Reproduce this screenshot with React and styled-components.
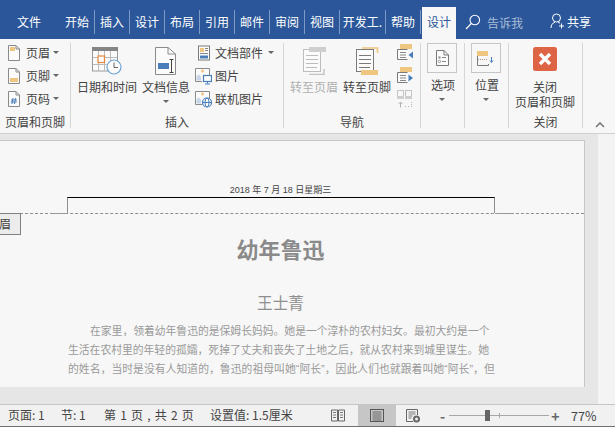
import React from "react";
import styled, { createGlobalStyle } from "styled-components";

const Global = createGlobalStyle`
  html, body { margin: 0; padding: 0; width: 615px; height: 427px; overflow: hidden; }
  body { font-family: "Noto Sans CJK SC", "Liberation Sans", sans-serif; background: #f7f7f7; }
  * { box-sizing: border-box; }
`;

const Shell = styled.div`
  width: 615px; height: 427px; display: flex; flex-direction: column; overflow: hidden;
`;

/* Title bar */
const TitleBar = styled.div`
  height: 39px; flex: none; background: #2b579a; display: flex; align-items: flex-start; color: #fff; font-size: 12px;
`;
const FileTab = styled.div`
  width: 60px; padding: 10px 0 0 17px; height: 39px; line-height: 24px;
`;
const Tab = styled.div`
  width: ${p => p.$w || 35}px; height: 24px; margin-top: 10px; line-height: 24px; text-align: center;
  border-right: 1px solid #7d9ac6; white-space: nowrap; overflow: hidden; flex: none;
`;
const ActiveTab = styled.div`
  width: 34px; height: 32px; margin: 7px 0 0 1px; padding-top: 3px; line-height: 24px; text-align: center;
  background: #f7f7f7; color: #2b579a; flex: none;
`;
const TellMe = styled.div`
  margin: 10px 0 0 9px; width: 85px; flex: none; display: flex; align-items: center; gap: 6px; height: 24px; color: #a9bbd8;
`;
const Share = styled.div`
  display: flex; align-items: center; gap: 2px; height: 24px; margin-top: 9px;
`;

/* Ribbon */
const Ribbon = styled.div`
  height: 95px; flex: none; background: #f7f7f7; padding: 4px 0 5px; display: flex;
  border-bottom: 1px solid #d0d0d0; color: #444; font-size: 12px;
`;
const Group = styled.div`
  width: ${p => p.$w}px; flex: none; border-right: 1px solid #d6d6d6; display: flex; flex-direction: column;
`;
const GroupBody = styled.div`
  height: 73px; display: flex; padding-left: ${p => p.$pad || 0}px; gap: ${p => p.$gap || 0}px;
`;
const GroupLabel = styled.div`
  height: 12px; line-height: 12px; text-align: center; white-space: nowrap;
`;
const Stack = styled.div`
  display: flex; flex-direction: column; margin-top: -2px;
`;
const SmallBtn = styled.div`
  height: 23px; display: flex; align-items: center; white-space: nowrap; gap: ${p => p.$gap || 3}px;
  padding-left: ${p => p.$pad || 0}px; flex: none;
`;
const Arrow = styled.span`
  display: inline-block; width: 0; height: 0; border-left: 3px solid transparent; border-right: 3px solid transparent;
  border-top: 3px solid #666; margin-left: ${p => p.$ml || 0}px; flex: none;
`;
const LargeBtn = styled.div`
  width: ${p => p.$w || 48}px; display: flex; flex-direction: column; align-items: center; padding-top: 4px; flex: none;
  color: ${p => p.$off ? "#b0b0b0" : "inherit"};
`;
const LargeIcon = styled.div`
  height: 28px; display: flex; justify-content: center; align-items: flex-start;
`;
const LargeText = styled.div`
  margin-top: 4px; line-height: ${p => p.$lh || 16}px; white-space: nowrap; text-align: center;
`;
const DropMark = styled.div`
  margin-top: 3px; height: 6px; display: flex; align-items: center;
`;
const BoxBtn = styled.div`
  width: 42px; display: flex; flex-direction: column; align-items: center;
`;
const BoxIcon = styled.div`
  width: 30px; height: 30px; border: 1px solid #c6c6c6; display: flex; align-items: center; justify-content: center;
`;
const BoxText = styled.div`
  margin: 4px 0 0 2px; line-height: 16px;
`;
const Collapse = styled.div`
  flex: 1; display: flex; justify-content: center; align-items: flex-end; padding: 0 0 0 2px;
`;

/* Workspace */
const Workspace = styled.div`
  flex: 1; display: flex; min-height: 0;
`;
const Canvas = styled.div`
  width: 598px; flex: none; background: #e6e6e6; padding: 6px 13px 17px 0; display: flex;
`;
const ScrollTrack = styled.div`
  flex: 1; background: #f4f4f4;
`;
const Page = styled.div`
  width: 585px; background: #f7f7f7; border-top: 1px solid #c6c6c6; border-right: 1px solid #c6c6c6;
  position: relative; overflow: hidden; color: #8a8a8a;
`;
const HeaderArea = styled.div`
  height: 73px; border-bottom: 1px dashed #8e8e8e; display: flex; flex-direction: column; align-items: center; justify-content: flex-end;
  padding-right: 23px;
`;
const HeaderDate = styled.div`
  font-size: 9px; line-height: 12px; color: #444; white-space: nowrap; margin-bottom: 1px; font-family: "Liberation Sans", "Noto Sans CJK SC", sans-serif;
`;
const HeaderFrame = styled.div`
  width: 428px; height: 16px; border-top: 1px solid #000; border-left: 1px solid #8e8e8e; border-right: 1px solid #8e8e8e; position: relative;
  &::before, &::after { content: ""; position: absolute; bottom: -1px; height: 1px; background: #999; width: 16px; }
  &::before { left: -16px; }
  &::after { right: -17px; }
`;
const HeaderTag = styled.div`
  position: absolute; left: -23px; top: 72px; width: 44px; height: 22px; background: #ececec; border: 1px solid #808080;
  font-size: 12px; line-height: 20px; text-align: center; color: #444; white-space: nowrap;
`;
const DocTitle = styled.h1`
  margin: 21px 0 0; padding-right: 23px; font-size: 22px; line-height: 26px; font-weight: 700; text-align: center; color: #8a8a8a;
`;
const DocAuthor = styled.div`
  margin-top: 31px; padding-right: 23px; font-size: 15.6px; line-height: 20px; text-align: center; color: #8f8f8f;
`;
const Para = styled.div`
  margin: 10px 0 0 68px; font-size: 10.8px; color: #9a9a9a; white-space: nowrap;
  font-family: "Liberation Sans", "Noto Sans CJK SC", sans-serif;
`;
const ParaLine = styled.div`
  height: 19px; line-height: 19px; padding-left: ${p => p.$indent || 0}px; letter-spacing: ${p => p.$track || 0}px;
`;

/* Status bar */
const StatusBar = styled.div`
  height: 23px; flex: none; background: #f1f1f1; border-top: 1px solid #c6c6c6; border-bottom: 1px solid #6f6f6f;
  display: flex; align-items: stretch; font-size: 12px; color: #444; white-space: nowrap; position: relative;
`;
const StatusText = styled.div`
  line-height: 20px; width: ${p => p.$w}px; flex: none; padding-left: ${p => p.$pad || 0}px; word-spacing: ${p => p.$ws || 0}px;
`;
const ViewBtn = styled.div`
  width: ${p => p.$w || 38}px; display: flex; align-items: center; justify-content: center; flex: none;
  padding-right: ${p => p.$shift || 0}px;
  background: ${p => p.$on ? "#c6c6c6" : "transparent"};
`;
const ZoomCtl = styled.div`
  display: flex; align-items: center; margin-left: 2px; flex: none;
`;
const ZoomSign = styled.span`
  width: ${p => p.$w}px; text-align: center; font-size: 14px; font-weight: 700; color: #666; line-height: 20px;
`;
const Track = styled.div`
  width: 100px; height: 1px; background: #a8a8a8; position: relative;
`;
const Thumb = styled.div`
  position: absolute; left: 36px; top: -5px; width: 5px; height: 11px; background: #666;
`;
const Tick = styled.div`
  position: absolute; left: 50px; top: -2px; width: 1px; height: 5px; background: #a8a8a8;
`;
const Percent = styled.div`
  line-height: 20px; margin-left: 9px; font-size: 12.5px;
`;

/* Icons */
const P = { g: "#7a7a7a", t: "#efc67f", b: "#4a7ebb", l: "#bdbdbd" };
const Svg = styled.svg`
  display: block; flex: none;
`;
const DocSmall = ({ children }) => (
  <Svg width="14" height="16" viewBox="0 0 14 16">
    <path d="M1.5.5H9L12.5 4v11.5h-11z" fill="#fbfbfb" stroke="#8a8a8a" />
    <path d="M9 .5V4h3.5" fill="none" stroke="#8a8a8a" />
    {children}
  </Svg>
);
const IconHeader = () => <DocSmall><rect x="3" y="2" width="5" height="4" fill={P.t} /></DocSmall>;
const IconFooter = () => <DocSmall><rect x="3" y="10" width="8" height="4" fill={P.t} /></DocSmall>;
const IconNum = () => <DocSmall><path d="M6 7l-1 6M8.5 7l-1 6M4 9h6M3.8 11h6" stroke={P.b} fill="none" /></DocSmall>;
const IconCalendar = () => (
  <Svg width="30" height="28" viewBox="0 0 30 28">
    <rect x="0.5" y="0" width="25" height="24" fill="#fbfbfb" stroke="#999" />
    <rect x="0" y="0" width="26" height="4" fill="#858585" />
    <path d="M6.5 4v20M12.5 4v20M18.5 4v20M1 10.5h24M1 17.5h24" stroke="#bbb" fill="none" />
    <rect x="6" y="9" width="6.5" height="6.5" fill="#fbfbfb" stroke="#e8893a" strokeWidth="1.2" />
    <circle cx="22" cy="20" r="7" fill="#fbfbfb" stroke="#6fa3d6" strokeWidth="1.2" />
    <path d="M22 15.5V20.5H26" fill="none" stroke="#666" />
  </Svg>
);
const IconDocInfo = () => (
  <Svg width="22" height="28" viewBox="0 0 22 28">
    <path d="M.5.5H13L20.5 7V27.5H.5z" fill="#fbfbfb" stroke="#8a8a8a" />
    <path d="M13 .5V7h7.5" fill="none" stroke="#8a8a8a" />
    <rect x="3" y="16" width="11" height="6" fill={P.b} />
    <path d="M14.5 12.5h4M14.5 25.5h4M16.5 12.5v13" fill="none" stroke="#444" />
  </Svg>
);
const IconParts = () => (
  <Svg width="16" height="16" viewBox="0 0 16 16">
    <rect x="2.5" y="1" width="11" height="14" fill="#fbfbfb" stroke="#7a7a7a" />
    <rect x="4" y="3" width="4" height="4" fill={P.t} />
    <path d="M9 3.5h3M9 5.5h3M4 8.5h8" stroke="#888" />
    <rect x="4" y="10.5" width="8" height="3" fill={P.b} />
  </Svg>
);
const PictureBase = () => (
  <>
    <path d="M14.5 9V1.5H.5v13H7" fill="#fbfbfb" stroke="#8a8a8a" />
    <path d="M7.5 2.5v3M6 4h3" stroke={P.t} strokeWidth="1.4" />
    <path d="M1.5 13.5V10l2-3 2.5 3v3.5z" fill="#c6d5e8" />
  </>
);
const IconPicture = () => (
  <Svg width="17" height="18" viewBox="0 0 17 18">
    <PictureBase />
    <rect x="8.5" y="8.5" width="8" height="6" fill="#fbfbfb" stroke={P.b} strokeWidth="1.2" />
    <path d="M12.5 14.5v2M10 17h5" stroke={P.b} />
  </Svg>
);
const IconOnline = () => (
  <Svg width="17" height="18" viewBox="0 0 17 18">
    <PictureBase />
    <circle cx="12" cy="12.5" r="4.5" fill="#fbfbfb" stroke={P.b} strokeWidth="1.2" />
    <ellipse cx="12" cy="12.5" rx="2" ry="4.5" fill="none" stroke={P.b} />
    <path d="M7.5 12.5h9" stroke={P.b} />
  </Svg>
);
const PageLines = ({ x = 0, y = 0, c, w = 17, h = 22 }) => (
  <>
    <rect x={x + 0.5} y={y + 0.5} width={w} height={h} fill="#fbfbfb" stroke={c} />
    <path d={`M${x + 3} ${y + 6.5}h${w - 5}M${x + 3} ${y + 10.5}h${w - 5}M${x + 3} ${y + 14.5}h${w - 5}M${x + 3} ${y + 18.5}h${w - 6}`} stroke={c} fill="none" />
  </>
);
const IconGoHeader = () => (
  <Svg width="23" height="28" viewBox="0 0 23 28">
    <PageLines y={2} c="#bdbdbd" />
    <rect x="6" y="0" width="17" height="5" fill="#cfcfcf" />
    <path d="M21 22v5.5H6" fill="none" stroke="#c4c4c4" strokeWidth="1.4" />
  </Svg>
);
const IconGoFooter = () => (
  <Svg width="23" height="28" viewBox="0 0 23 28">
    <path d="M6 1h15.5v5" fill="none" stroke={P.t} strokeWidth="1.6" />
    <PageLines y={2} c="#7a7a7a" />
    <rect x="5" y="23" width="17" height="5" fill={P.t} />
  </Svg>
);
const IconPrev = () => (
  <Svg width="16" height="17" viewBox="0 0 16 17">
    <rect x="3" y="0" width="12" height="5" fill={P.t} />
    <path d="M10.5 5.5H.5v10h10" fill="#fbfbfb" stroke="#7a7a7a" />
    <path d="M3 8.5h6M3 11h6M3 13.5h6" stroke="#888" />
    <path d="M16 7.5v7l-4.5-3.5z" fill={P.b} />
  </Svg>
);
const IconNext = () => (
  <Svg width="16" height="17" viewBox="0 0 16 17">
    <rect x="3" y="0" width="12" height="5" fill={P.t} />
    <path d="M10.5 5.5H.5v10h10" fill="#fbfbfb" stroke="#7a7a7a" />
    <path d="M3 8.5h6M3 11h6M3 13.5h6" stroke="#888" />
    <path d="M11.5 7.5v7L16 11z" fill={P.b} />
  </Svg>
);
const IconLink = () => (
  <Svg width="16" height="18" viewBox="0 0 16 18">
    <rect x="0.5" y="0.5" width="6" height="6" fill="none" stroke="#c4c4c4" />
    <rect x="8.5" y="0.5" width="6" height="6" fill="none" stroke="#c4c4c4" />
    <rect x="0" y="6" width="7" height="3" fill="#cfcfcf" />
    <rect x="8" y="6" width="7" height="3" fill="#cfcfcf" />
    <path d="M3.5 17.5V12M1.5 14l2-2 2 2" fill="none" stroke="#b5b5b5" />
    <path d="M8 16.5h1M11 16.5h1M14 16.5h1M14 12.5h1M14 14.5h1" stroke="#b5b5b5" />
  </Svg>
);
const IconOptions = () => (
  <Svg width="13" height="16" viewBox="0 0 13 16">
    <path d="M.5.5H8L12.5 5v10.5H.5z" fill="#fbfbfb" stroke="#7a7a7a" />
    <path d="M8 .5V5h4.5" fill="none" stroke="#7a7a7a" />
    <circle cx="3.5" cy="7.5" r="1.2" fill="#999" />
    <circle cx="3.5" cy="11.5" r="1.2" fill="none" stroke="#999" />
    <path d="M6 7.5h4M6 11.5h4" stroke="#888" />
  </Svg>
);
const IconPosition = () => (
  <Svg width="18" height="15" viewBox="0 0 18 15">
    <rect x="0" y="0" width="11" height="5" fill={P.t} />
    <path d="M.5 5v9.5h11V13" fill="none" stroke="#7a7a7a" />
    <path d="M1 8.5h10" stroke="#a98" strokeDasharray="1 1" />
    <path d="M14.5 6v5M13 9.5l1.5 2 1.5-2" fill="none" stroke={P.b} />
  </Svg>
);
const IconClose = () => (
  <Svg width="24" height="24" viewBox="0 0 24 24">
    <rect width="24" height="24" rx="2.5" fill="#dd6546" />
    <path d="M7 7l10 10M17 7L7 17" stroke="#fff" strokeWidth="3.4" fill="none" />
  </Svg>
);
const IconChevron = () => (
  <Svg width="10" height="6" viewBox="0 0 10 6">
    <path d="M1 5l4-4 4 4" fill="none" stroke="#777" strokeWidth="1.6" />
  </Svg>
);
const IconSearch = () => (
  <Svg width="16" height="16" viewBox="0 0 16 16">
    <circle cx="9.8" cy="6" r="4.8" fill="none" stroke="#fff" strokeWidth="1.1" />
    <path d="M6.3 9.5L1 15" stroke="#fff" strokeWidth="1.2" />
  </Svg>
);
const IconUser = () => (
  <Svg width="15" height="16" viewBox="0 0 15 16">
    <circle cx="6.5" cy="5" r="4" fill="none" stroke="#fff" />
    <path d="M1 15c0-3 1.500-5 4-5.800M8 9.200c.8.200 1.500.6 2 1" fill="none" stroke="#fff" />
    <path d="M11.500 10.500v5M9 13h5" stroke="#fff" />
  </Svg>
);
const IconRead = () => (
  <Svg width="14" height="13" viewBox="0 0 14 13">
    <path d="M.5 1h6v11h-6zM7.500 1h6v11h-6z" fill="none" stroke="#666" />
    <path d="M2 3.500h3M2 6h3M2 8.500h3M9 3.500h3M9 6h3M9 8.500h3" stroke="#777" />
  </Svg>
);
const IconPrint = () => (
  <Svg width="14" height="13" viewBox="0 0 14 13">
    <rect x="0.500" y="0.500" width="13" height="12" fill="none" stroke="#555" />
    <path d="M2.500 3h9M2.500 5h9M2.500 7h9M2.500 9h9M2.500 11h9" stroke="#666" />
  </Svg>
);
const IconWeb = () => (
  <Svg width="15" height="14" viewBox="0 0 15 14">
    <path d="M7 12.500H.5V.5h11V6" fill="none" stroke="#666" />
    <path d="M2.500 3h7M2.500 5h7M2.500 7h4M2.500 9h3" stroke="#777" />
    <circle cx="10.500" cy="10" r="3.500" fill="#666" />
    <circle cx="10.500" cy="10" r="1.500" fill="#f1f1f1" />
  </Svg>
);

const tabs = ["开始", "插入", "设计", "布局", "引用", "邮件", "审阅", "视图"];

export default function App() {
  return (
    <Shell>
      <Global />
      <TitleBar>
        <FileTab>文件</FileTab>
        {tabs.map(t => <Tab key={t}>{t}</Tab>)}
        <Tab $w={46}>开发工.</Tab>
        <Tab>帮助</Tab>
        <ActiveTab>设计</ActiveTab>
        <TellMe><IconSearch />告诉我</TellMe>
        <Share><IconUser />共享</Share>
      </TitleBar>
      <Ribbon>
        <Group $w={71}>
          <GroupBody>
            <Stack>
              <SmallBtn $pad={7} $gap={5}><IconHeader /><span>页眉</span><Arrow $ml={-2} /></SmallBtn>
              <SmallBtn $pad={7} $gap={5}><IconFooter /><span>页脚</span><Arrow $ml={-2} /></SmallBtn>
              <SmallBtn $pad={7} $gap={5}><IconNum /><span>页码</span><Arrow $ml={-2} /></SmallBtn>
            </Stack>
          </GroupBody>
          <GroupLabel>页眉和页脚</GroupLabel>
        </Group>
        <Group $w={213}>
          <GroupBody $pad={6} $gap={5}>
            <LargeBtn $w={60}>
              <LargeIcon><IconCalendar /></LargeIcon>
              <LargeText>日期和时间</LargeText>
            </LargeBtn>
            <LargeBtn>
              <LargeIcon><IconDocInfo /></LargeIcon>
              <LargeText>文档信息</LargeText>
              <DropMark><Arrow /></DropMark>
            </LargeBtn>
            <Stack>
              <SmallBtn $gap={3} $pad={1}><IconParts /><span>文档部件</span><Arrow $ml={2} /></SmallBtn>
              <SmallBtn $gap={3}><IconPicture /><span>图片</span></SmallBtn>
              <SmallBtn $gap={3}><IconOnline /><span>联机图片</span></SmallBtn>
            </Stack>
          </GroupBody>
          <GroupLabel>插入</GroupLabel>
        </Group>
        <Group $w={137}>
          <GroupBody $pad={6} $gap={5}>
            <LargeBtn $off>
              <LargeIcon><IconGoHeader /></LargeIcon>
              <LargeText>转至页眉</LargeText>
            </LargeBtn>
            <LargeBtn>
              <LargeIcon><IconGoFooter /></LargeIcon>
              <LargeText>转至页脚</LargeText>
            </LargeBtn>
            <Stack>
              <SmallBtn $pad={1}><IconPrev /></SmallBtn>
              <SmallBtn $pad={1}><IconNext /></SmallBtn>
              <SmallBtn $pad={1}><IconLink /></SmallBtn>
            </Stack>
          </GroupBody>
          <GroupLabel>导航</GroupLabel>
        </Group>
        <Group $w={44}>
          <GroupBody $pad={0}>
            <BoxBtn>
              <BoxIcon><IconOptions /></BoxIcon>
              <BoxText>选项</BoxText>
              <DropMark><Arrow /></DropMark>
            </BoxBtn>
          </GroupBody>
        </Group>
        <Group $w={44}>
          <GroupBody>
            <BoxBtn>
              <BoxIcon><IconPosition /></BoxIcon>
              <BoxText>位置</BoxText>
              <DropMark><Arrow /></DropMark>
            </BoxBtn>
          </GroupBody>
        </Group>
        <Group $w={74}>
          <GroupBody $pad={5}>
            <LargeBtn $w={62}>
              <LargeIcon><IconClose /></LargeIcon>
              <LargeText $lh={15}>关闭<br />页眉和页脚</LargeText>
            </LargeBtn>
          </GroupBody>
          <GroupLabel>关闭</GroupLabel>
        </Group>
        <Collapse><IconChevron /></Collapse>
      </Ribbon>
      <Workspace>
        <Canvas>
          <Page>
            <HeaderArea>
              <HeaderDate>2018 年 7 月 18 日星期三</HeaderDate>
              <HeaderFrame />
            </HeaderArea>
            <HeaderTag>页眉</HeaderTag>
            <DocTitle>幼年鲁迅</DocTitle>
            <DocAuthor>王士菁</DocAuthor>
            <Para>
              <ParaLine $indent={22}>在家里，领着幼年鲁迅的是保姆长妈妈。她是一个淳朴的农村妇女。最初大约是一个</ParaLine>
              <ParaLine>生活在农村里的年轻的孤孀，死掉了丈夫和丧失了土地之后，就从农村来到城里谋生。她</ParaLine>
              <ParaLine $track={0.05}>的姓名，当时是没有人知道的，鲁迅的祖母叫她“阿长”，因此人们也就跟着叫她“阿长”，但</ParaLine>
            </Para>
          </Page>
        </Canvas>
        <ScrollTrack />
      </Workspace>
      <StatusBar>
        <StatusText $w={61} $pad={8}>页面: 1</StatusText>
        <StatusText $w={43}>节: 1</StatusText>
        <StatusText $w={106} $ws={1.5}>第 1 页 , 共 2 页</StatusText>
        <StatusText $w={115}>设置值: 1.5厘米</StatusText>
        <ViewBtn $w={33} $shift={8}><IconRead /></ViewBtn>
        <ViewBtn $on><IconPrint /></ViewBtn>
        <ViewBtn $shift={4}><IconWeb /></ViewBtn>
        <ZoomCtl>
          <ZoomSign $w={13}>-</ZoomSign>
          <Track><Tick /><Thumb /></Track>
          <ZoomSign $w={13}>+</ZoomSign>
          <Percent>77%</Percent>
        </ZoomCtl>
      </StatusBar>
    </Shell>
  );
}
